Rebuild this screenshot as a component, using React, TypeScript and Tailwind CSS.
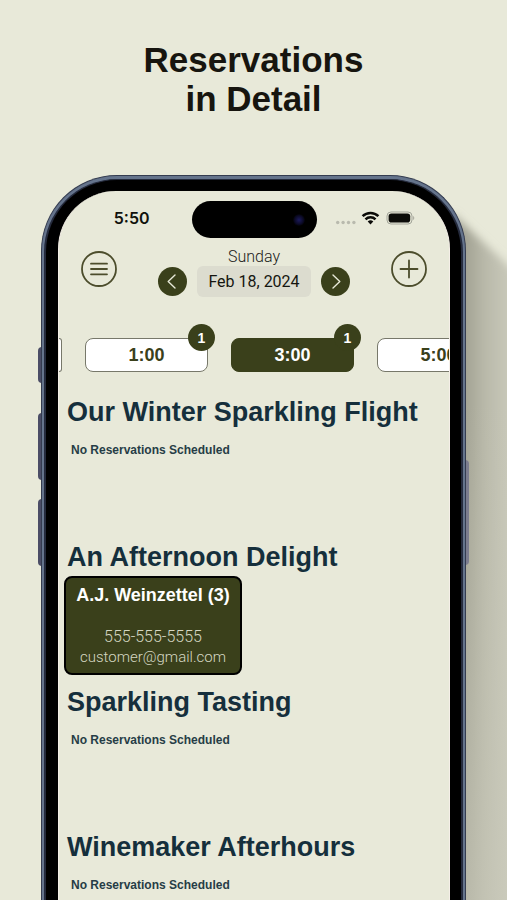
import React, { useState } from 'react';

interface TimeSlot {
  time: string;
  count: number;
}

interface Reservation {
  name: string;
  partySize: number;
  phone: string;
  email: string;
}

interface Experience {
  title: string;
  reservations: Reservation[];
}

const timeSlots: TimeSlot[] = [
  { time: '1:00', count: 1 },
  { time: '3:00', count: 1 },
  { time: '5:00', count: 0 },
];

const experiences: Experience[] = [
  { title: 'Our Winter Sparkling Flight', reservations: [] },
  {
    title: 'An Afternoon Delight',
    reservations: [
      { name: 'A.J. Weinzettel', partySize: 3, phone: '555-555-5555', email: 'customer@gmail.com' },
    ],
  },
  { title: 'Sparkling Tasting', reservations: [] },
  { title: 'Winemaker Afterhours', reservations: [] },
];

const StatusBar: React.FC = () => (
  <div className="grid grid-cols-[1fr_125px_1fr] items-center pt-[10px]">
    <span className="pb-[3px] pr-[42px] text-right font-[Inter,sans-serif] text-base font-semibold leading-6 text-[#11120c]">5:50</span>
    <div className="flex h-[37px] items-center justify-end rounded-full bg-black pr-3">
      <span className="h-3 w-3 rounded-full bg-[radial-gradient(circle,#1c1a5c_0%,#0b0a26_50%,#000_75%)]" />
    </div>
    <div className="flex items-center pb-[3px] pl-[18px]">
      <svg width="22" height="14" viewBox="0 0 22 14" fill="#b9baae">
        <circle cx="2.7" cy="11.5" r="1.7" />
        <circle cx="8.1" cy="11.5" r="1.7" />
        <circle cx="13.5" cy="11.5" r="1.7" />
        <circle cx="18.9" cy="11.5" r="1.7" />
      </svg>
      <svg className="ml-1" width="19" height="14" viewBox="0 0 19 14" fill="none" stroke="#0b0b08" strokeWidth="2.5">
        <path d="M1.6 5.2a11.2 11.2 0 0 1 15.8 0" />
        <path d="M4.5 8.4a7.1 7.1 0 0 1 10 0" />
        <path d="M9.5 13.4l-2.8-2.9a4 4 0 0 1 5.6 0z" fill="#0b0b08" stroke="none" />
      </svg>
      <svg className="ml-[6px]" width="29" height="14" viewBox="0 0 29 14">
        <rect x="1" y="1" width="25" height="12" rx="4" fill="none" stroke="#a3a499" />
        <rect x="2.6" y="2.4" width="21.6" height="9.2" rx="2.8" fill="#0b0b08" />
        <path d="M27.2 5v4c1.4-.6 1.4-3.4 0-4z" fill="#a3a499" />
      </svg>
    </div>
  </div>
);

interface DateHeaderProps {
  weekday: string;
  date: string;
}

const DateHeader: React.FC<DateHeaderProps> = ({ weekday, date }) => (
  <header className="flex items-start justify-between px-[21px] pt-2">
    <button type="button" aria-label="Menu" className="mt-1">
      <svg width="38" height="38" viewBox="0 0 38 38" fill="none" stroke="#4c4d2c" strokeWidth="1.8">
        <circle cx="19" cy="19" r="17" />
        <path d="M11 13.7h16M11 19h16M11 24.3h16" strokeLinecap="round" />
      </svg>
    </button>
    <div className="mt-px flex items-end gap-[10px]">
      <button type="button" aria-label="Previous day" className="mb-px rounded-full bg-[#3a401b]">
        <svg width="29" height="29" viewBox="0 0 29 29" fill="none" stroke="#e8e9d9" strokeWidth="1.4" strokeLinecap="round" strokeLinejoin="round">
          <path d="M17 8l-6.8 6.5L17 21" />
        </svg>
      </button>
      <div className="flex flex-col items-center">
        <span className="font-[Roboto,sans-serif] text-base font-light leading-[19px] text-[#20211a]">{weekday}</span>
        <button type="button" className="h-[31px] whitespace-nowrap rounded-md bg-[#dcdccf] px-[11px] font-[Roboto,sans-serif] text-base text-[#15160f]">
          {date}
        </button>
      </div>
      <button type="button" aria-label="Next day" className="mb-px rounded-full bg-[#3a401b]">
        <svg width="29" height="29" viewBox="0 0 29 29" fill="none" stroke="#e8e9d9" strokeWidth="1.4" strokeLinecap="round" strokeLinejoin="round">
          <path d="M12 8l6.8 6.5L12 21" />
        </svg>
      </button>
    </div>
    <button type="button" aria-label="Add reservation" className="mt-1">
      <svg width="38" height="38" viewBox="0 0 38 38" fill="none" stroke="#4c4d2c" strokeWidth="1.8">
        <circle cx="19" cy="19" r="17" />
        <path d="M10.5 19h17M19 10.5v17" strokeLinecap="round" />
      </svg>
    </button>
  </header>
);

const ReservationCard: React.FC<{ reservation: Reservation }> = ({ reservation }) => (
  <article className="mt-[3px] flex w-[178px] flex-col items-center rounded-lg border-2 border-black bg-[#3a401b] pb-[6px] pt-[5px]">
    <h3 className="text-lg font-bold leading-6 text-white">
      {reservation.name} ({reservation.partySize})
    </h3>
    <p className="mt-5 font-[Roboto,sans-serif] text-base font-light leading-5 text-[#d5d7c2]">{reservation.phone}</p>
    <p className="font-[Roboto,sans-serif] text-[15px] font-light leading-5 text-[#d5d7c2]">{reservation.email}</p>
  </article>
);

const App: React.FC = () => {
  const [selectedTime, setSelectedTime] = useState<string>('3:00');

  return (
    <main className="flex h-screen min-h-96 flex-col overflow-hidden bg-[#e8e9d9] font-['Liberation_Sans',Arial,sans-serif]">
      <h1 className="pt-10 text-center text-[35px] font-bold leading-[39px] text-[#17150f]">
        Reservations
        <br />
        in Detail
      </h1>

      <div className="relative mx-[41px] mt-[57px] flex min-h-0 flex-1 flex-col">
        {/* Cast shadow */}
        <svg className="absolute left-full top-0 -ml-6 h-full w-[72px]" viewBox="0 0 72 725" preserveAspectRatio="none">
          <defs>
            <linearGradient id="cast" gradientUnits="userSpaceOnUse" x1="24" y1="0" x2="68" y2="0">
              <stop offset="0" stopColor="#a3a394" />
              <stop offset="0.4" stopColor="#b8b8a9" />
              <stop offset="1" stopColor="#c9c9ba" />
            </linearGradient>
            <linearGradient id="fade" x1="0" y1="0" x2="0" y2="1">
              <stop offset="0.2" stopColor="#cdcdbe" stopOpacity="0" />
              <stop offset="1" stopColor="#cdcdbe" stopOpacity="0.5" />
            </linearGradient>
            <filter id="soft" x="-20%" y="-10%" width="140%" height="120%">
              <feGaussianBlur stdDeviation="4" />
            </filter>
          </defs>
          <path d="M10 38L100 122V760H10z" fill="url(#cast)" filter="url(#soft)" />
          <rect x="10" y="100" width="62" height="625" fill="url(#fade)" />
        </svg>

        {/* Side buttons */}
        <span className="absolute -left-[3px] top-[172px] h-9 w-1 rounded-l-sm bg-[#4b4d66]" />
        <span className="absolute -left-[3px] top-[238px] h-[67px] w-1 rounded-l-sm bg-[#4b4d66]" />
        <span className="absolute -left-[3px] top-[324px] h-[67px] w-1 rounded-l-sm bg-[#4b4d66]" />
        <span className="absolute -right-[3px] top-[285px] h-[105px] w-1 rounded-r-sm bg-[#7b7c8e]" />

        <div className="relative flex min-h-0 flex-1 flex-col rounded-t-[76px] border-x border-t border-[#343c50] bg-[#65748c] px-[2px] pt-[3px]">
          <div className="flex min-h-0 flex-1 flex-col rounded-t-[73px] border-x-2 border-t border-[#252b3d] bg-black pl-3 pr-[11px] pt-[11px]">
            <div className="min-h-0 flex-1 overflow-hidden rounded-t-[58px] border-x border-[#f5efe8] bg-[#e8e9d9]">
              <StatusBar />
              <DateHeader weekday="Sunday" date="Feb 18, 2024" />

              <nav aria-label="Times" className="mt-[41px] flex gap-[23px]">
                {/* Edge of the slot scrolled off to the left */}
                <span className="h-[34px] w-[3px] shrink-0 rounded-r-lg border border-l-0 border-[#77786a] bg-white" />
                {timeSlots.map(slot => (
                  <button
                    key={slot.time}
                    type="button"
                    onClick={() => setSelectedTime(slot.time)}
                    className={`relative h-[34px] w-[123px] shrink-0 rounded-lg border text-lg font-bold ${
                      slot.time === selectedTime
                        ? 'border-[#3a401b] bg-[#3a401b] text-white'
                        : 'border-[#77786a] bg-white text-[#3a401b]'
                    }`}
                  >
                    {slot.time}
                    {slot.count > 0 && (
                      <span className="absolute -right-2 -top-[15px] flex h-[27px] w-[27px] items-center justify-center rounded-full bg-[#3a401b] text-sm text-white">
                        {slot.count}
                      </span>
                    )}
                  </button>
                ))}
              </nav>

              <div className="flex flex-col pl-[5px] pt-6">
                {experiences.map(exp => (
                  <section key={exp.title} className="min-h-[145px]">
                    <h2 className="pl-[3px] text-[27px] font-bold leading-8 text-[#152f3c]">{exp.title}</h2>
                    {exp.reservations.length === 0 ? (
                      <p className="pl-[7px] pt-[14px] text-xs font-bold leading-4 text-[#263d46]">No Reservations Scheduled</p>
                    ) : (
                      exp.reservations.map(r => <ReservationCard key={r.email} reservation={r} />)
                    )}
                  </section>
                ))}
              </div>
            </div>
          </div>
        </div>
      </div>
    </main>
  );
};

export default App;
